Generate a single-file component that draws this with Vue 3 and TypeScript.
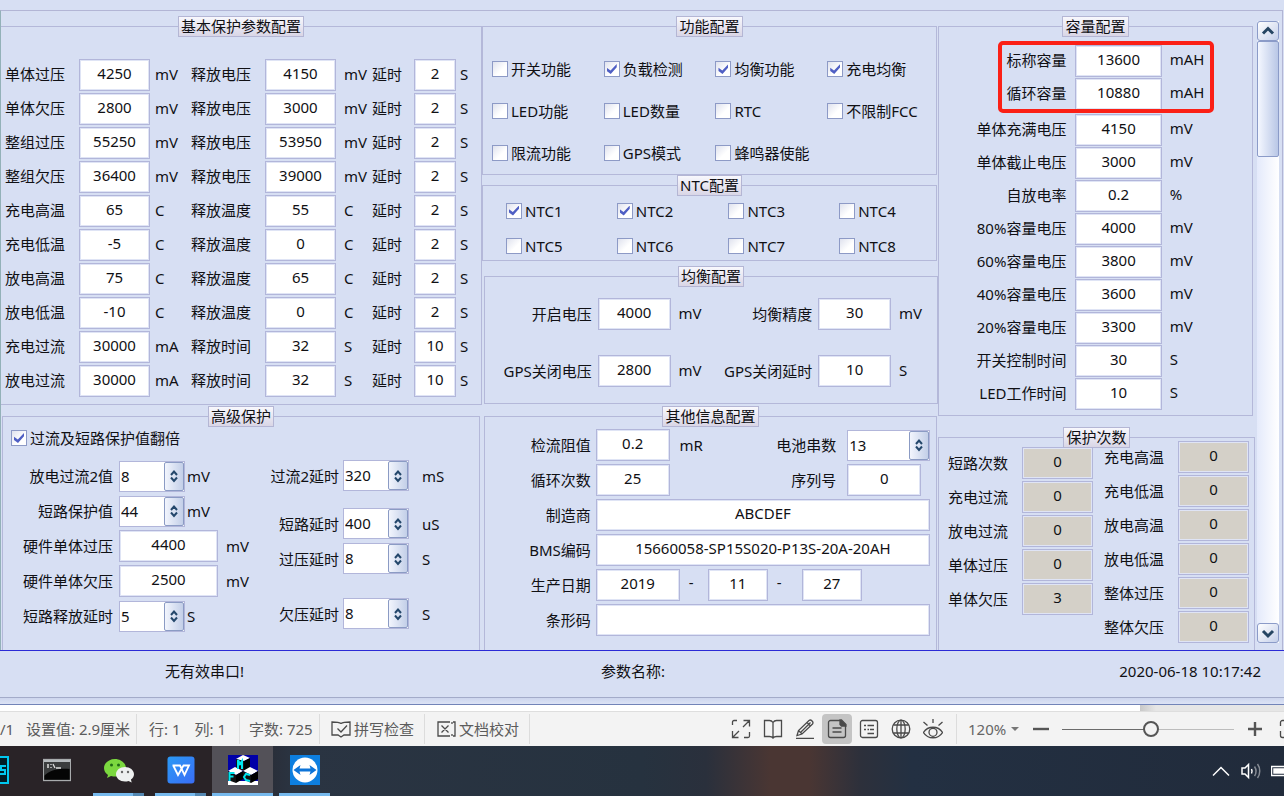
<script setup lang="ts">
import { reactive, ref } from 'vue'

interface Field { label: string; value: string; unit: string }
interface Check { label: string; checked: boolean }

const basicRows = reactive([
  ['单体过压', '4250', 'mV', '释放电压', '4150', 'mV', '2'],
  ['单体欠压', '2800', 'mV', '释放电压', '3000', 'mV', '2'],
  ['整组过压', '55250', 'mV', '释放电压', '53950', 'mV', '2'],
  ['整组欠压', '36400', 'mV', '释放电压', '39000', 'mV', '2'],
  ['充电高温', '65', 'C', '释放温度', '55', 'C', '2'],
  ['充电低温', '-5', 'C', '释放温度', '0', 'C', '2'],
  ['放电高温', '75', 'C', '释放温度', '65', 'C', '2'],
  ['放电低温', '-10', 'C', '释放温度', '0', 'C', '2'],
  ['充电过流', '30000', 'mA', '释放时间', '32', 'S', '10'],
  ['放电过流', '30000', 'mA', '释放时间', '32', 'S', '10'],
])

const doubled = ref(true)
const advLeft = reactive([
  { label: '放电过流2值', value: '8', unit: 'mV', spin: true },
  { label: '短路保护值', value: '44', unit: 'mV', spin: true },
  { label: '硬件单体过压', value: '4400', unit: 'mV', spin: false },
  { label: '硬件单体欠压', value: '2500', unit: 'mV', spin: false },
  { label: '短路释放延时', value: '5', unit: 'S', spin: true },
])
const advRight = reactive<Field[]>([
  { label: '过流2延时', value: '320', unit: 'mS' },
  { label: '短路延时', value: '400', unit: 'uS' },
  { label: '过压延时', value: '8', unit: 'S' },
  { label: '欠压延时', value: '8', unit: 'S' },
])

const functions = reactive<Check[]>([
  { label: '开关功能', checked: false },
  { label: '负载检测', checked: true },
  { label: '均衡功能', checked: true },
  { label: '充电均衡', checked: true },
  { label: 'LED功能', checked: false },
  { label: 'LED数量', checked: false },
  { label: 'RTC', checked: false },
  { label: '不限制FCC', checked: false },
  { label: '限流功能', checked: false },
  { label: 'GPS模式', checked: false },
  { label: '蜂鸣器使能', checked: false },
])
const ntcs = reactive<Check[]>(
  [1, 2, 3, 4, 5, 6, 7, 8].map((n) => ({ label: 'NTC' + n, checked: n < 3 })),
)
const balance = reactive<Field[]>([
  { label: '开启电压', value: '4000', unit: 'mV' },
  { label: '均衡精度', value: '30', unit: 'mV' },
  { label: 'GPS关闭电压', value: '2800', unit: 'mV' },
  { label: 'GPS关闭延时', value: '10', unit: 'S' },
])
const info = reactive({
  resistance: '0.2', series: '13', cycles: '25', serial: '0', maker: 'ABCDEF',
  code: '15660058-SP15S020-P13S-20A-20AH', year: '2019', month: '11', day: '27', barcode: '',
})

const ratedCapacity = reactive<Field[]>([
  { label: '标称容量', value: '13600', unit: 'mAH' },
  { label: '循环容量', value: '10880', unit: 'mAH' },
])
const capacity = reactive<Field[]>([
  { label: '单体充满电压', value: '4150', unit: 'mV' },
  { label: '单体截止电压', value: '3000', unit: 'mV' },
  { label: '自放电率', value: '0.2', unit: '%' },
  { label: '80%容量电压', value: '4000', unit: 'mV' },
  { label: '60%容量电压', value: '3800', unit: 'mV' },
  { label: '40%容量电压', value: '3600', unit: 'mV' },
  { label: '20%容量电压', value: '3300', unit: 'mV' },
  { label: '开关控制时间', value: '30', unit: 'S' },
  { label: 'LED工作时间', value: '10', unit: 'S' },
])
const countsLeft = [
  ['短路次数', '0'], ['充电过流', '0'], ['放电过流', '0'], ['单体过压', '0'], ['单体欠压', '3'],
]
const countsRight = [
  ['充电高温', '0'], ['充电低温', '0'], ['放电高温', '0'], ['放电低温', '0'], ['整体过压', '0'], ['整体欠压', '0'],
]
const zoomLevel = ref(52)
</script>

<template>
  <div class="page">
    <main class="client">
      <div class="columns">
        <div class="col">
          <fieldset class="group basic">
            <legend>基本保护参数配置</legend>
            <div v-for="(r, i) in basicRows" :key="i" class="basic-row">
              <label :for="'a' + i">{{ r[0] }}</label>
              <input :id="'a' + i" v-model="r[1]" class="box" type="text">
              <span class="u1">{{ r[2] }}</span>
              <label :for="'b' + i">{{ r[3] }}</label>
              <input :id="'b' + i" v-model="r[4]" class="box" type="text">
              <span class="u2">{{ r[5] }}</span>
              <label :for="'c' + i">延时</label>
              <input :id="'c' + i" v-model="r[6]" class="box" type="text">
              <span class="u3">S</span>
            </div>
          </fieldset>

          <fieldset class="group advanced open">
            <legend>高级保护</legend>
            <label class="check"><input v-model="doubled" type="checkbox">过流及短路保护值翻倍</label>
            <div class="adv-body">
              <div class="adv-left">
                <div v-for="(f, i) in advLeft" :key="i" class="adv-row">
                  <label :for="'l' + i">{{ f.label }}</label>
                  <span v-if="f.spin" class="spin">
                    <input :id="'l' + i" v-model="f.value" type="text">
                    <button type="button" aria-label="调整"><svg viewBox="0 0 10 14"><path d="M2 6 5 2.5 8 6M2 8.5 5 12 8 8.5" /></svg></button>
                  </span>
                  <input v-else :id="'l' + i" v-model="f.value" class="box wide" type="text">
                  <span :class="f.spin ? 'near' : 'far'">{{ f.unit }}</span>
                </div>
              </div>
              <div class="adv-right">
                <div v-for="(f, i) in advRight" :key="i" class="adv-row">
                  <label :for="'r' + i">{{ f.label }}</label>
                  <span class="spin">
                    <input :id="'r' + i" v-model="f.value" type="text">
                    <button type="button" aria-label="调整"><svg viewBox="0 0 10 14"><path d="M2 6 5 2.5 8 6M2 8.5 5 12 8 8.5" /></svg></button>
                  </span>
                  <span class="mid">{{ f.unit }}</span>
                </div>
              </div>
            </div>
          </fieldset>
        </div>

        <div class="col">
          <fieldset class="group functions">
            <legend>功能配置</legend>
            <div class="checks">
              <label v-for="c in functions" :key="c.label" class="check"><input v-model="c.checked" type="checkbox">{{ c.label }}</label>
            </div>
          </fieldset>
          <fieldset class="group ntc">
            <legend>NTC配置</legend>
            <div class="checks">
              <label v-for="c in ntcs" :key="c.label" class="check"><input v-model="c.checked" type="checkbox">{{ c.label }}</label>
            </div>
          </fieldset>
          <fieldset class="group balance">
            <legend>均衡配置</legend>
            <div class="balance-grid">
              <template v-for="(f, i) in balance" :key="i">
                <label :for="'e' + i">{{ f.label }}</label>
                <input :id="'e' + i" v-model="f.value" class="box" type="text">
                <span>{{ f.unit }}</span>
              </template>
            </div>
          </fieldset>
          <fieldset class="group info open">
            <legend>其他信息配置</legend>
            <div class="info-grid">
              <label class="cap" for="i1">检流阻值</label>
              <input id="i1" v-model="info.resistance" class="box" type="text">
              <span class="between"><span>mR</span><label for="i2">电池串数</label></span>
              <span class="spin">
                <input id="i2" v-model="info.series" type="text">
                <button type="button" aria-label="调整"><svg viewBox="0 0 10 14"><path d="M2 6 5 2.5 8 6M2 8.5 5 12 8 8.5" /></svg></button>
              </span>
              <label class="cap" for="i3">循环次数</label>
              <input id="i3" v-model="info.cycles" class="box" type="text">
              <span class="between"><span></span><label for="i4">序列号</label></span>
              <input id="i4" v-model="info.serial" class="box serial" type="text">
              <label class="cap" for="i5">制造商</label>
              <input id="i5" v-model="info.maker" class="box full" type="text">
              <label class="cap" for="i6">BMS编码</label>
              <input id="i6" v-model="info.code" class="box full" type="text">
              <label class="cap" for="i7">生产日期</label>
              <span class="date full">
                <input id="i7" v-model="info.year" class="box year" type="text" aria-label="年">
                <span>-</span>
                <input v-model="info.month" class="box" type="text" aria-label="月">
                <span>-</span>
                <input v-model="info.day" class="box" type="text" aria-label="日">
              </span>
              <label class="cap" for="i8">条形码</label>
              <input id="i8" v-model="info.barcode" class="box full" type="text">
            </div>
          </fieldset>
        </div>

        <div class="col">
          <fieldset class="group capacity">
            <legend>容量配置</legend>
            <div class="rated">
              <div v-for="(f, i) in ratedCapacity" :key="i" class="cap-row">
                <label :for="'p' + i">{{ f.label }}</label>
                <input :id="'p' + i" v-model="f.value" class="box" type="text">
                <span>{{ f.unit }}</span>
              </div>
            </div>
            <div v-for="(f, i) in capacity" :key="i" class="cap-row">
              <label :for="'q' + i">{{ f.label }}</label>
              <input :id="'q' + i" v-model="f.value" class="box" type="text">
              <span>{{ f.unit }}</span>
            </div>
          </fieldset>
          <fieldset class="group counts open">
            <legend>保护次数</legend>
            <div class="counts-body">
              <div class="count-col first">
                <div v-for="(c, i) in countsLeft" :key="i" class="count-row">
                  <label :for="'m' + i">{{ c[0] }}</label>
                  <input :id="'m' + i" class="box" type="text" readonly :value="c[1]">
                </div>
              </div>
              <div class="count-col">
                <div v-for="(c, i) in countsRight" :key="i" class="count-row">
                  <label :for="'n' + i">{{ c[0] }}</label>
                  <input :id="'n' + i" class="box" type="text" readonly :value="c[1]">
                </div>
              </div>
            </div>
          </fieldset>
        </div>
      </div>
      <div class="scroll">
        <button type="button" aria-label="向上滚动"><svg viewBox="0 0 20 18"><path d="M5 11.5 10 6.5 15 11.5" /></svg></button>
        <div class="thumb"></div>
        <div class="track"></div>
        <button type="button" aria-label="向下滚动"><svg viewBox="0 0 20 18"><path d="M5 7 10 12 15 7" /></svg></button>
      </div>
    </main>

    <footer class="app-status">
      <span class="port">无有效串口!</span>
      <span class="param">参数名称:</span>
      <span class="time">2020-06-18 10:17:42</span>
    </footer>
    <div class="window-edge"></div>
    <div class="doc-edge"><div class="paper"></div><div class="desk"></div></div>

    <div class="doc-status">
      <span class="pages">/1</span>
      <span class="pos">设置值: 2.9厘米</span>
      <span class="cell lines"><span>行: 1</span><span>列: 1</span></span>
      <span class="cell words">字数: 725</span>
      <button type="button" class="cell tool">
        <svg viewBox="0 0 20 18"><path d="M10 3.5C8 2 5 2 1 2v13h6l3 2 3-2h6V2c-4 0-7 0-9 1.500M6.500 8.500l3.500 3.500 6-6.500" /></svg>拼写检查
      </button>
      <button type="button" class="cell tool">
        <svg viewBox="0 0 20 18"><path d="M14 2H2v14h12M17 2h2v14h-2M16 2v2M16 14v2M5.500 5.500l7 7M12.500 5.500l-7 7" /></svg>文档校对
      </button>
      <span class="cell"></span>
      <span class="spacer"></span>
      <button type="button" class="view" aria-label="全屏"><svg viewBox="0 0 20 20"><path d="M1.500 6V3a1.500 1.500 0 0 1 1.500-1.500h3M12.500 1.500h6v6M18.500 1.500l-6.500 6.500M1.500 12v6.500h6M1.500 18.500l6.500-6.500M18.500 13v4a1.500 1.500 0 0 1-1.500 1.500h-4" /></svg></button>
      <button type="button" class="view" aria-label="阅读"><svg viewBox="0 0 20 20"><path d="M10 3.500C9 2 8 1.500 6.500 1.500h-5v16h5C8 17.500 9 17.700 10 19c1-1.300 2-1.500 3.500-1.500h5v-16h-5C12 1.500 11 2 10 3.500zV19" /></svg></button>
      <button type="button" class="view" aria-label="写作"><svg viewBox="0 0 20 20"><path d="M1 19.500h18M2 16.500l1.500-5L14 1.500c2-1.500 5 1.500 3.500 3.500L7 15zM3.500 11.500 7 15M6 13 15.500 3.500M12 3.500l3.500 3.500" /></svg></button>
      <button type="button" class="view on" aria-label="页面"><svg viewBox="0 0 20 20"><path d="M13 1.500H3.500a2 2 0 0 0-2 2v13a2 2 0 0 0 2 2h13a2 2 0 0 0 2-2V7M5.500 9h9M5.500 13h9" /><path class="solid" d="M13 1h1.500L19 5.500V7h-4.500L13 5.500z" /></svg></button>
      <button type="button" class="view" aria-label="大纲"><svg viewBox="0 0 20 20"><rect x="1.500" y="1.500" width="17" height="17" rx="2" /><path d="M5 6.500h2M8.500 6.500H15M8.500 10.500H10M11 10.500h4M5 10.500h2M8.500 14.500H15" /></svg></button>
      <button type="button" class="view" aria-label="网页"><svg viewBox="0 0 20 20"><circle cx="10" cy="10" r="8.800" /><ellipse cx="10" cy="10" rx="4.200" ry="8.800" /><path d="M10 1.200v17.600M2.500 6h15M2.500 14h15" /></svg></button>
      <button type="button" class="view" aria-label="护眼"><svg viewBox="0 0 20 20"><path d="M0.500 13.500C5 6.500 15 6.500 19.500 13.500 15 20.500 5 20.500 0.500 13.500zM10 0v4M0.500 3l4 3.500M19.500 3l-4 3.500" /><circle cx="10" cy="13.300" r="4" /></svg></button>
      <button type="button" class="cell percent">120%<i class="caret"></i></button>
      <button type="button" class="sign" aria-label="缩小"><svg viewBox="0 0 16 16"><path d="M0 8h16" /></svg></button>
      <input v-model="zoomLevel" class="slider" type="range" min="0" max="100" aria-label="缩放">
      <button type="button" class="sign" aria-label="放大"><svg viewBox="0 0 16 16"><path d="M1 8h14M8 1v14" /></svg></button>
      <button type="button" class="fit" aria-label="适合页面"><svg viewBox="0 0 20 20"><path d="M1.500 7V3.500a2 2 0 0 1 2-2H8M1.500 12v4.500a2 2 0 0 0 2 2H8" /></svg></button>
    </div>

    <nav class="taskbar">
      <button type="button" class="app" aria-label="Photoshop">
        <svg viewBox="0 0 28 28"><rect x="1" y="1" width="26" height="26" fill="#001d26" stroke="#00c8f0" stroke-width="2" /><path d="M25 10h-5v4h4v4h-5" fill="none" stroke="#00c8f0" stroke-width="2" /></svg>
      </button>
      <button type="button" class="app" aria-label="命令提示符">
        <svg viewBox="0 0 28 28"><rect x=".5" y="3.500" width="27" height="21" fill="#050505" stroke="#a8abad" /><path d="M1 4h26v2H1z" fill="#b5babd" /><path d="M1 6h26v7C15 12 7 14 1 20z" fill="#3b3d3e" /><path d="M4 9h2M4 11h2M8 8v1M8 11v1M10 8l2 4M13 12h5" fill="none" stroke="#ddd" /></svg>
      </button>
      <button type="button" class="app run many" aria-label="微信">
        <svg class="big" viewBox="0 0 30 30"><path d="M11 4C5 4 0 8 0 13c0 3 1.500 5 4 7l-1 3 4-2c1.500.5 3 .6 5 .6C18 21 22 17.500 22 13S17 4 11 4z" fill="#7bd83f" /><circle cx="7.500" cy="10" r="1.500" fill="#1f6b17" /><circle cx="14.500" cy="10" r="1.500" fill="#1f6b17" /><path d="M21 12c-5 0-9 3.200-9 7.300s4 7.200 9 7.200c1.300 0 2.400-.2 3.500-.6l3.200 1.700-.8-3c2-1.300 3.100-3.200 3.100-5.300 0-4.100-4-7.300-9-7.300z" fill="#eef0f0" /><circle cx="18" cy="17" r="1.200" fill="#666" /><circle cx="24" cy="17" r="1.200" fill="#666" /></svg>
      </button>
      <button type="button" class="app run many" aria-label="WPS">
        <svg viewBox="0 0 28 28"><defs><linearGradient id="wps" x2="1" y2="1"><stop stop-color="#2a9af5" /><stop offset="1" stop-color="#3a6df6" /></linearGradient></defs><rect x=".5" y=".5" width="27" height="27" rx="3" fill="url(#wps)" /><path d="M5.500 9.500H13L17.500 19 22 9.500H16.500L11 19 6.500 10" fill="none" stroke="#fff" stroke-width="1.800" /></svg>
      </button>
      <button type="button" class="app run current" aria-label="BMS">
        <svg class="big" viewBox="0 0 30 30"><path d="M0 0h30v30H0z" fill="#0000a8" /><path d="M0 26h30v4H0z" fill="#fff" /><path d="M8 4l7-4 7 3-6 3z" fill="#fff" /><path d="M8 4l8 2v10l-8-3z" fill="#151515" /><path d="M16 6l6-3v10l-6 3z" fill="#000" /><path d="M0 16l7-4 8 4-7 4z" fill="#fff" /><path d="M0 16l8 4v8l-8-3z" fill="#111" /><path d="M8 20l7-4v8l-7 4z" fill="#000" /><path d="M15 16l7-4 8 4-7 4z" fill="#fff" /><path d="M15 16l8 4v8l-8-4z" fill="#111" /><path d="M23 20l7-4v8l-7 4z" fill="#000" /><path d="M10 14V5l2 4 2-3v8M1.500 26v-8h5M1.500 21.500h4M22 20l-4-1-2 3 2 3 4 1" fill="none" stroke="#00e5ee" stroke-width="2" /></svg>
      </button>
      <button type="button" class="app run" aria-label="TeamViewer">
        <svg class="big" viewBox="0 0 30 30"><path d="M0 0h30v30H0z" fill="#0d7fe0" /><circle cx="15" cy="15" r="12.500" fill="#fff" /><path d="M3.500 15l7-5-1 3.500h11l-1-3.500 7 5-7 5 1-3.500h-11l1 3.500z" fill="#0d74d8" /></svg>
      </button>
      <span class="spacer"></span>
      <button type="button" class="tray" aria-label="显示隐藏的图标"><svg viewBox="0 0 20 20"><path d="M2 14.500 10 6.500 18 14.500" /></svg></button>
      <button type="button" class="tray" aria-label="音量"><svg viewBox="0 0 20 20"><path d="M1 7h3l3.500-3.500v13L4 13H1zM10.500 8c.8 1.500.8 3 0 4.500" /><path opacity=".45" d="M13.500 5.500c2 3 2 6.500 0 9.500M16.500 3c3 4 3 10 0 14" /></svg></button>
      <button type="button" class="tray" aria-label="电池"><svg viewBox="0 0 20 20"><path d="M.5 5.500h18v9H.5z" /><path d="M3 8h13v4H3z" fill="#fff" /></svg></button>
    </nav>
  </div>
</template>

<style>
html, body { margin: 0; overflow: hidden; }
</style>

<style scoped>
.page, .page * { box-sizing: border-box; }
.page {
  display: flex; flex-direction: column; height: 100vh; overflow: hidden;
  background: #d7dff3; color: #101014;
  font: 15px/20px "Noto Sans", "Noto Sans CJK SC", sans-serif; white-space: nowrap;
}
.page input, .page button { font: inherit; color: inherit; margin: 0; min-width: 0; }
.page button { background: none; border: 0; padding: 0; }
svg { display: block; fill: none; stroke: #4a4a4a; stroke-width: 1.3; }

.client {
  flex: 1; min-height: 0; display: flex; margin: 10px 1px 0 0; overflow: hidden;
  border: 1px solid #b2b5d5; border-left-color: #93b1b8; border-bottom: 0;
}
.columns { flex: 1; min-width: 0; display: grid; grid-template-columns: 481fr 456fr 317fr; }
.col { display: flex; flex-direction: column; min-width: 0; padding-top: 5px; }
.group { margin: 0; padding: 0; min-width: 0; border: 1px solid #b4b8d9; }
.group legend {
  margin: 0 auto; padding: 0 2px; line-height: 19px; border: 1px solid #b4b6d4;
  background: linear-gradient(#f8f8fd, #d9d6e6);
}
.open { flex: 1; border-bottom: 0; }

.box {
  width: 100%; height: 32px; text-align: center; background: #fff;
  border: 1px solid #b2b6da; outline: 0; box-shadow: inset 0 0 0 1px #dfe4f5;
}
.page .box { padding: 0 0 5px; }

.group.basic { padding: 21px 0 6px; margin-bottom: 1px; border-left: 0; }
.basic-row {
  display: grid; align-items: center; height: 34px; padding-left: 4px;
  grid-template-columns: 74fr 71fr 41fr 74fr 71fr 36fr 42fr 42fr 25fr;
}
.basic-row > * { min-width: 0; }
.basic-row label, .basic-row span { padding-bottom: 3px; }
.basic-row .u1 { padding-left: 5px; }
.basic-row .u2 { padding-left: 8px; }
.basic-row .u3 { padding-left: 4px; }

.check { display: flex; align-items: center; gap: 3px; }
.check input {
  appearance: none; flex: none; width: 16px; height: 16px; border: 1px solid #8d9ac6;
  background: linear-gradient(135deg, #dfe2ee, #fff 60%); display: grid; place-items: center;
}
.check input:checked::after {
  content: ""; width: 10px; height: 10px; background: #4f5fc4;
  clip-path: polygon(0 38%, 38% 66%, 100% 0, 100% 32%, 40% 100%, 0 70%);
}
.checks { display: grid; grid-template-columns: 112fr 112fr 112fr 109fr; }

.advanced { margin: 0 2px 0 1px; }
.advanced > .check { padding: 1px 0 0 8px; }
.adv-body { display: flex; padding-top: 12px; }
.adv-left { flex: none; display: flex; flex-direction: column; gap: 3px; }
.adv-left .adv-row { height: 32px; }
.adv-right { flex: 1; display: grid; grid-template-rows: 48px 35px 55px 32px; align-items: start; }
.adv-row { display: flex; align-items: center; }
.adv-left .adv-row label { width: 110px; text-align: right; margin-right: 6px; }
.adv-right .adv-row label { width: 90px; text-align: right; margin-right: 4px; }
.near { padding-left: 2px; }
.far { padding-left: 8px; }
.mid { padding-left: 13px; }
.wide { width: 99px; }

.spin { display: flex; width: 66px; height: 31px; border: 1px solid #b2b6da; background: #fff; }
.page .spin input { flex: 1; width: 0; padding: 0 0 1px 1px; border: 0; background: none; outline: 0; }
.page .spin button {
  width: 20px; flex: none; display: grid; place-items: center; border: 1px solid #8b9bc4;
  border-radius: 2px; background: linear-gradient(90deg, #f2f5fd, #c3cfe8);
}
.spin svg { width: 10px; height: 14px; stroke: #24476b; stroke-width: 2; }

.functions .checks { grid-auto-rows: 42px; padding: 11px 0 0 9px; }
.ntc { margin-bottom: 5px; }
.ntc .checks { grid-auto-rows: 29px; row-gap: 6px; padding-left: 23px; grid-template-columns: 111fr 112fr 111fr 97fr; }
.functions, .ntc { margin-right: 1px; }
.balance { margin: 0 0 2px 2px; padding: 11px 0 16px; }
.balance-grid {
  display: grid; align-items: center; row-gap: 25px;
  grid-template-columns: 113fr 73fr 44fr 104fr 73fr 46fr;
}
.balance-grid label { text-align: right; padding: 0 6px 1px 0; }
.balance-grid span { padding: 0 0 2px 8px; }
.info { margin: 0 1px 0 2px; padding-top: 2px; }
.info-grid {
  display: grid; align-items: center; row-gap: 3px; padding-right: 6px;
  grid-template-columns: 111fr 74fr 178fr 83fr; grid-auto-rows: 32px;
}
.cap { text-align: right; padding-right: 5px; }
.full { grid-column: 2 / 5; }
.between { display: flex; justify-content: space-between; padding: 0 11px 0 10px; }
.info .spin { width: 100%; }
.info .serial { width: 74px; }
.date { display: flex; }
.date .box { flex: none; width: 60px; }
.date .year { width: 84px; }
.date span { width: 34px; padding: 3px 0 0 9px; }
.date .year + span { width: 28px; }

.capacity { padding: 8px 0 4px; margin: 0 2px 11px 0; }
.rated { position: relative; margin-bottom: 3px; }
.rated::after {
  content: ""; position: absolute; top: -4px; bottom: -2px; left: 19%; right: 12%;
  border: 4px solid #fb2016; border-radius: 5px; pointer-events: none;
}
.cap-row {
  display: grid; align-items: center; height: 33px; padding-bottom: 1px;
  grid-template-columns: 136fr 86fr 90fr;
}
.cap-row label { text-align: right; padding: 0 9px 2px 0; }
.cap-row span { padding: 0 0 5px 8px; }

.counts-body { display: flex; justify-content: space-between; padding: 0 5px 0 9px; margin-top: -8px; }
.count-col.first { padding-top: 6px; }
.count-row { display: flex; align-items: center; gap: 14px; height: 34px; }
.count-row .box { width: 71px; background: #d4d0c8; }
.count-row label { width: 60px; }
.counts legend { position: relative; z-index: 1; }

.scroll { flex: none; display: flex; flex-direction: column; width: 22px; margin: 10px 3px 7px 2px; background: linear-gradient(90deg, #e4eafb, #fff); }
.page .scroll button { height: 20px; flex: none; border: 1px solid #8b9bc8; border-radius: 3px; background: linear-gradient(135deg, #fff, #c5d0ea); }
.scroll svg { width: 20px; height: 18px; stroke: #254562; stroke-width: 3; }
.thumb { height: 116px; border: 1px solid #8b9bc8; border-radius: 2px; background: linear-gradient(90deg, #f4f7ff, #b9c7e6); }
.track { flex: 1; }

.app-status {
  flex: none; display: grid; grid-template-columns: 601fr 400fr 283fr; align-items: center;
  height: 48px; padding: 0 0 7px; border-top: 1px solid #2b2bd6; border-bottom: 1px solid #a3abc9;
}
.port { padding-left: 165px; }
.time { text-align: right; padding-right: 23px; }
.window-edge { flex: none; height: 7px; border-bottom: 1px solid #7284b8; background: linear-gradient(#cdd6ee, #dce3f5); }
.doc-edge { flex: none; display: flex; height: 6px; }
.paper { flex: 1140; background: #fff; }
.desk { flex: 144; background: linear-gradient(90deg, #c8c8c8, #e6e6e6 16px); }

.doc-status {
  flex: none; display: flex; align-items: center; height: 35px; overflow: hidden;
  background: #f3f3f3; border-top: 1px solid #dedede; color: #5c5c5c;
}
.doc-status > * { flex: none; }
.doc-status > .spacer, .spacer { flex: 1; }
.pages { width: 26px; }
.pos { width: 110px; }
.cell { display: flex; align-items: center; height: 30px; border-left: 1px solid #dcdcdc; }
.page button.cell { border-left: 1px solid #dcdcdc; }
.lines { width: 103px; gap: 14px; padding-left: 12px; }
.words { width: 80px; padding-left: 9px; }
.page .tool { width: 105px; gap: 3px; padding-left: 11px; }
.tool svg { width: 20px; height: 18px; }
.page .view { width: 30px; height: 30px; margin-right: 2px; display: grid; place-items: center; border-radius: 4px; }
.page .view.on { background: #c4c4c4; }
.view svg { width: 20px; height: 20px; }
.solid { fill: #4a4a4a; }
.page .percent { width: 77px; margin-left: 6px; padding-left: 11px; gap: 5px; color: #666; }
.caret { border: 4px solid transparent; border-top-color: #777; border-bottom: 0; }
.sign svg { width: 16px; height: 16px; stroke-width: 2.4; stroke: #555; }
.page .slider {
  appearance: none; width: 172px; height: 20px; margin: 0 13px; outline: 0;
  background: linear-gradient(90deg, #6b6b6b 52%, #bdbdbd 52%) center / 100% 1px no-repeat;
}
.slider::-webkit-slider-thumb {
  appearance: none; width: 16px; height: 16px; border: 2px solid #555; border-radius: 50%; background: #f3f3f3;
}
.page .fit { margin-left: 16px; width: 5px; overflow: hidden; }
.fit svg { width: 20px; height: 20px; }

.taskbar {
  flex: none; display: flex; gap: 1px; height: 50px; overflow: hidden;
  background: linear-gradient(90deg, #292327 0, #292327 17%, #2a3442 23%, #26323f 50%, #2a303c 55%, #4a3633 60%, #4a3633 63%, #2d303b 67%, #233042 71%, #212b3b 100%);
}
.page .app { flex: none; width: 61px; display: grid; place-items: center; border-bottom: 3px solid transparent; }
.page .app:first-child { margin-left: -36px; }
.app svg { width: 28px; height: 28px; stroke: none; }
.app svg.big { width: 30px; height: 30px; }
.page .run { background: linear-gradient(90deg, transparent 5px, #76b9ed 5px, #76b9ed 56px, transparent 56px) border-box bottom / 100% 3px no-repeat; }
.page .many { background-image: linear-gradient(90deg, transparent 5px, #76b9ed 5px, #76b9ed 45px, #5488b2 45px, #5488b2 56px, transparent 56px); }
.page .current { background: linear-gradient(#535158 47px, #76b9ed 47px) border-box; }
.page .tray { flex: none; width: 20px; margin-right: 9px; }
.page .tray:last-child { margin-right: -7px; }
.tray svg { width: 20px; height: 20px; stroke: #fff; stroke-width: 1.5; }
</style>
